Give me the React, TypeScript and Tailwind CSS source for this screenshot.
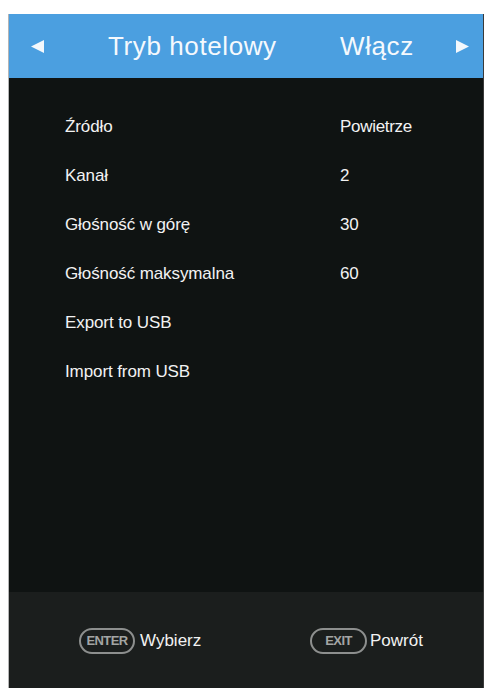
import React from "react";

const font = { fontFamily: '"Liberation Sans", Arial, sans-serif' };

type Row = { label: string; value?: string };

const rows: Row[] = [
  { label: "Źródło", value: "Powietrze" },
  { label: "Kanał", value: "2" },
  { label: "Głośność w górę", value: "30" },
  { label: "Głośność maksymalna", value: "60" },
  { label: "Export to USB" },
  { label: "Import from USB" },
];

function Arrow({ dir }: { dir: "left" | "right" }) {
  return (
    <svg width="15" height="15" viewBox="0 0 15 15" className="shrink-0">
      {dir === "left" ? (
        <polygon points="1,7.5 14,1 14,14" fill="#f4f8fc" />
      ) : (
        <polygon points="14,7.5 1,1 1,14" fill="#f4f8fc" />
      )}
    </svg>
  );
}

function KeyPill({ label, width }: { label: string; width: string }) {
  return (
    <span
      className={`flex h-[26px] ${width} shrink-0 items-center justify-center rounded-full border-2 border-[#8d8f8e] text-[13px] font-bold tracking-[-0.6px] text-[#a3a5a4]`}
    >
      {label}
    </span>
  );
}

export default function App() {
  return (
    <div className="min-h-[690px] bg-white pt-[14px] pl-[8px] pr-[3px]" style={font}>
      <div className="flex h-[674px] flex-col border-l border-[#b5b5b5] border-r border-r-[#3a3a3a]">
        {/* title bar */}
        <div className="flex h-[64px] shrink-0 items-center bg-[#4b9fe0] pl-[21px] pr-[13px] text-[#f5f9fd]">
          <Arrow dir="left" />
          <span className="ml-[63px] w-[232px] shrink-0 text-[26px] tracking-[0.6px]">Tryb hotelowy</span>
          <span className="text-[26px] tracking-[0.6px]">Włącz</span>
          <span className="flex-1" />
          <Arrow dir="right" />
        </div>

        {/* settings list */}
        <div className="flex-1 bg-[#0f1312] pt-[24px] pl-[56px] text-[17px] text-[#f2f2f2]">
          {rows.map((r) => (
            <div key={r.label} className="flex h-[49px] items-center">
              <span className="w-[275px] shrink-0 tracking-[-0.1px]">{r.label}</span>
              {r.value && <span className="tracking-[-0.3px]">{r.value}</span>}
            </div>
          ))}
        </div>

        {/* key hints */}
        <div className="flex h-[96px] shrink-0 items-center bg-[#1b1e1d] pl-[70px] pt-[2px] text-[17px] text-[#f2f2f2]">
          <div className="flex w-[231px] shrink-0 items-center gap-[5px]">
            <KeyPill label="ENTER" width="w-[56px]" />
            <span>Wybierz</span>
          </div>
          <div className="flex items-center gap-[3px]">
            <KeyPill label="EXIT" width="w-[57px]" />
            <span>Powrót</span>
          </div>
        </div>
      </div>
    </div>
  );
}
